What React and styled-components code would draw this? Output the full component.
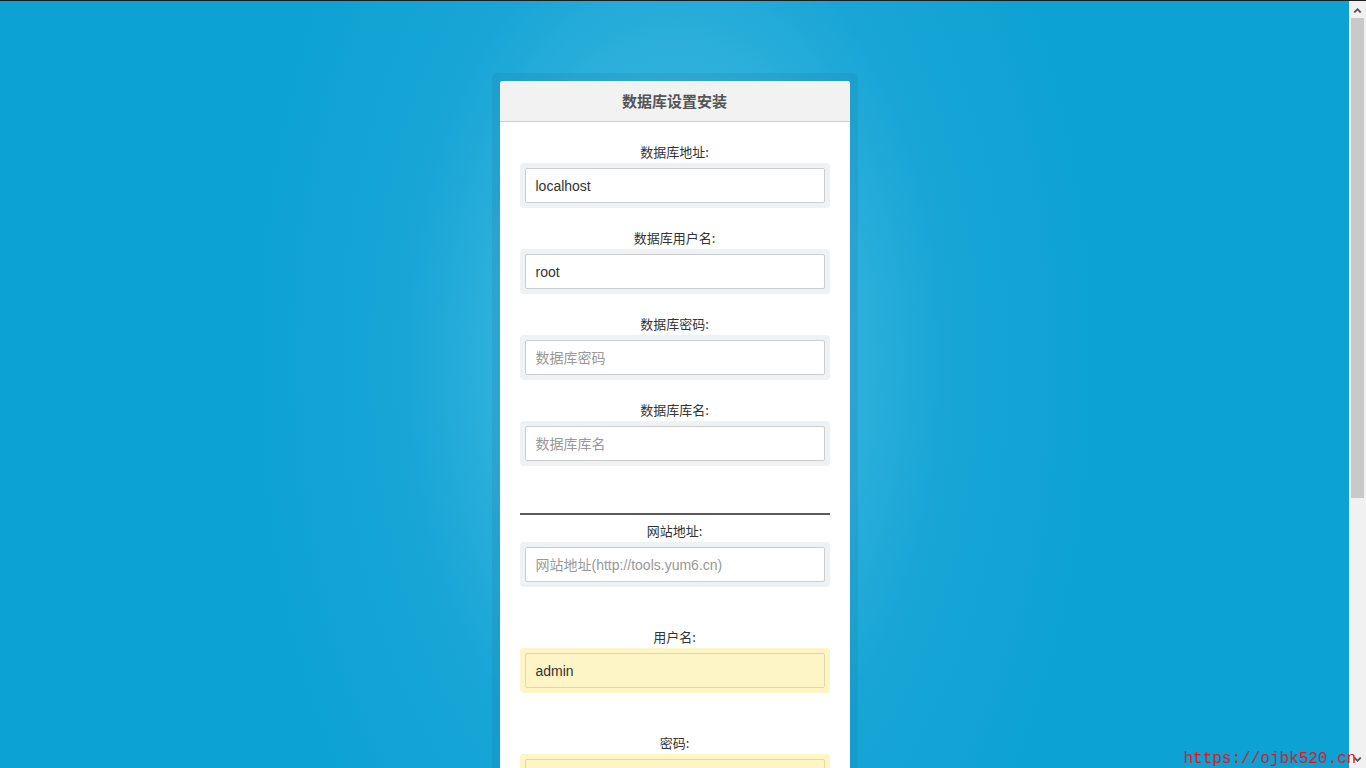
import React from 'react';
import styled, { createGlobalStyle } from 'styled-components';

const GlobalStyle = createGlobalStyle`
  html, body {
    margin: 0;
    padding: 0;
    overflow: hidden;
  }
  body {
    border-top: 1px solid #1d1d1d;
    background: #0ca2d4;
    font-family: "Liberation Sans", "Noto Sans CJK SC", sans-serif;
    color: #333;
  }
`;

const Page = styled.div`
  height: calc(100vh - 1px);
  overflow-y: auto;
  scrollbar-width: none;
  &::-webkit-scrollbar {
    display: none;
  }
`;

const Content = styled.div`
  width: calc(100% - 17px);
  min-height: 1174px;
  padding-top: 72px;
  box-sizing: border-box;
  background:
    radial-gradient(ellipse 430px 720px at 50% 360px,
      rgba(90, 199, 230, 0.95) 0%,
      rgba(66, 185, 224, 0.85) 30%,
      rgba(33, 168, 215, 0.6) 62%,
      rgba(12, 162, 212, 0) 100%),
    #0ca2d4;
`;

const Scrollbar = styled.div`
  position: fixed;
  top: 1px;
  right: 0;
  bottom: 0;
  width: 17px;
  display: flex;
  flex-direction: column;
  background: #f1f1f1;
`;

const ScrollButton = styled.div`
  height: 17px;
  display: flex;
  align-items: center;
  justify-content: center;
  flex-shrink: 0;
`;

const ScrollTrack = styled.div`
  flex: 1;
  padding: 0 2px;
`;

const ScrollThumb = styled.div`
  height: 480px;
  background: #c9c9c9;
`;

const Frame = styled.div`
  width: 350px;
  margin: 0 auto;
  padding: 8px;
  border-radius: 6px;
  background: rgba(0, 40, 80, 0.07);
`;

const Card = styled.form`
  background: #fff;
  border-radius: 3px;
  overflow: hidden;
`;

const Header = styled.div`
  height: 40px;
  line-height: 40px;
  background: #f2f2f2;
  border-bottom: 1px solid #cfcfcf;
  text-align: center;
  font-family: "Noto Sans CJK SC", sans-serif;
  font-size: 15px;
  font-weight: bold;
  color: #555;
`;

const Body = styled.div`
  display: flex;
  flex-direction: column;
  padding: 21px 20px 30px;
`;

const Field = styled.div`
  margin-top: ${(p) => (p.$spaced ? '20px' : '0')};
  margin-bottom: 21px;
`;

const Label = styled.label`
  display: block;
  text-align: center;
  font-family: "Noto Sans CJK SC", sans-serif;
  font-size: 13px;
  line-height: 18px;
  color: #333;
  margin-bottom: 2px;
`;

const InputWrap = styled.div`
  padding: 5px;
  border-radius: 4px;
  background: ${(p) => (p.$filled ? '#fef5c6' : '#eef2f5')};
`;

const Input = styled.input`
  display: block;
  width: 100%;
  height: 35px;
  box-sizing: border-box;
  padding: 0 10px;
  border: 1px solid ${(p) => (p.$filled ? '#e6d6a6' : '#cdcdcd')};
  border-radius: 2px;
  background: ${(p) => (p.$filled ? '#fef5c6' : '#fff')};
  font-family: "Liberation Sans", "Noto Sans CJK SC", sans-serif;
  font-size: 14px;
  color: #333;
  outline: none;
  &::placeholder {
    color: #999;
  }
`;

const Divider = styled.hr`
  width: 100%;
  margin: 26px 0 7px;
  border: none;
  border-top: 2px solid #5a5a5a;
`;

const Submit = styled.button`
  display: block;
  width: 100%;
  height: 40px;
  margin-top: 10px;
  border: none;
  border-radius: 3px;
  background: #0ca2d4;
  color: #fff;
  font-family: "Noto Sans CJK SC", sans-serif;
  font-size: 15px;
`;

const Watermark = styled.a`
  position: fixed;
  right: 10px;
  bottom: 0;
  z-index: 2;
  font-family: "Liberation Mono", monospace;
  font-size: 16px;
  line-height: 18px;
  color: #e8141b;
  text-decoration: none;
`;

const Caret = ({ down }) => (
  <svg width="9" height="6" viewBox="0 0 9 6">
    <path
      d={down ? 'M0.5 1 L4.5 5 L8.5 1 L7 0 L4.5 2.5 L2 0 Z' : 'M0.5 5 L4.5 1 L8.5 5 L7 6 L4.5 3.5 L2 6 Z'}
      fill="#505050"
    />
  </svg>
);

const fields = [
  { label: '数据库地址:', value: 'localhost' },
  { label: '数据库用户名:', value: 'root' },
  { label: '数据库密码:', placeholder: '数据库密码', type: 'password' },
  { label: '数据库库名:', placeholder: '数据库库名' },
];

const FormField = ({ label, value, placeholder, type, filled, spaced }) => (
  <Field $spaced={spaced}>
    <Label>{label}</Label>
    <InputWrap $filled={filled}>
      <Input
        $filled={filled}
        type={type || 'text'}
        defaultValue={value}
        placeholder={placeholder}
      />
    </InputWrap>
  </Field>
);

export default function App() {
  return (
    <Page>
      <GlobalStyle />
      <Content>
        <Frame>
          <Card onSubmit={(e) => e.preventDefault()}>
            <Header>数据库设置安装</Header>
            <Body>
              {fields.map((f) => (
                <FormField key={f.label} {...f} />
              ))}
              <Divider />
              <FormField label="网站地址:" placeholder="网站地址(http://tools.yum6.cn)" />
              <FormField label="用户名:" value="admin" filled spaced />
              <FormField label="密码:" type="password" filled spaced />
              <FormField label="确认密码:" type="password" filled spaced />
              <Submit type="submit">立即安装</Submit>
            </Body>
          </Card>
        </Frame>
      </Content>
      <Scrollbar>
        <ScrollButton>
          <Caret />
        </ScrollButton>
        <ScrollTrack>
          <ScrollThumb />
        </ScrollTrack>
        <ScrollButton>
          <Caret down />
        </ScrollButton>
      </Scrollbar>
      <Watermark href="#">https://ojbk520.cn</Watermark>
    </Page>
  );
}
